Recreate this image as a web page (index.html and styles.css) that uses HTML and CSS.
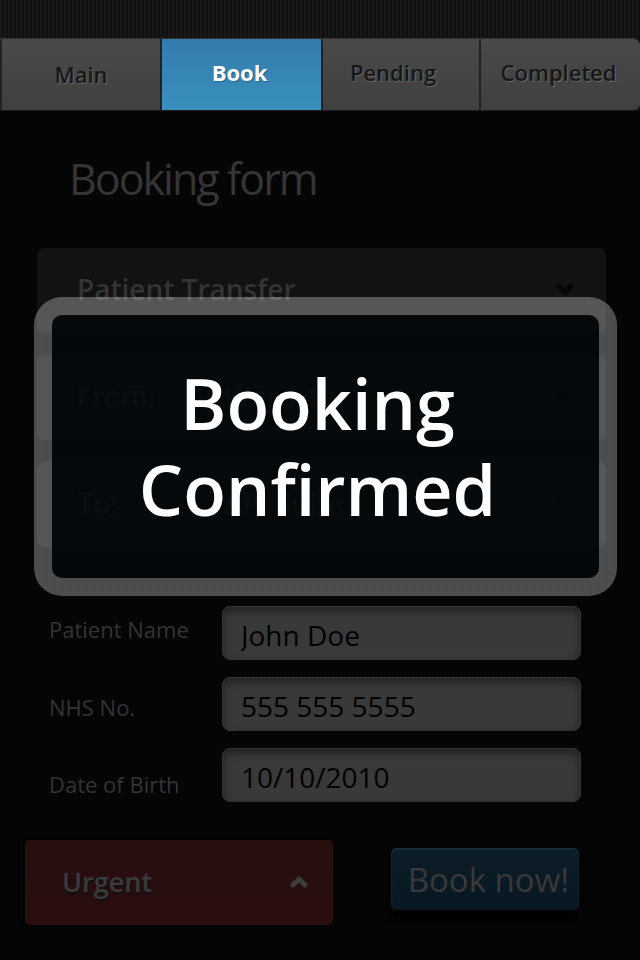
FILE: index.html
```html
<!DOCTYPE html>
<html lang="en">
<head>
<meta charset="utf-8">
<meta name="viewport" content="width=device-width, initial-scale=1">
<title>Booking form</title>
<link rel="stylesheet" href="styles.css">
</head>
<body>
<nav class="tabs">
  <a class="tab tab-low" href="#main">Main</a>
  <a class="tab active" href="#book" aria-current="page">Book</a>
  <a class="tab tab-pending" href="#pending">Pending</a>
  <a class="tab" href="#completed">Completed</a>
</nav>
<main class="page">
  <h1>Booking form</h1>
  <form>
    <div class="cards">
      <div class="card">
        <select class="card-select type" aria-label="Booking type"><option>Patient Transfer</option></select>
        <svg class="chevron" viewBox="0 0 18 12" aria-hidden="true"><path d="M3 3l6 6 6-6"/></svg>
      </div>
      <div class="card">
        <label for="from">From:</label>
        <select class="card-select" id="from"><option>Ward 10</option></select>
        <svg class="chevron" viewBox="0 0 18 12" aria-hidden="true"><path d="M3 3l6 6 6-6"/></svg>
      </div>
      <div class="card">
        <label for="to">To:</label>
        <select class="card-select" id="to"><option>API Suite</option></select>
        <svg class="chevron" viewBox="0 0 18 12" aria-hidden="true"><path d="M3 3l6 6 6-6"/></svg>
      </div>
      <div class="dialog" role="alertdialog" aria-labelledby="notice">
        <p id="notice">Booking<br>Confirmed</p>
      </div>
    </div>
    <div class="fields">
      <div class="labels">
        <label for="name">Patient Name</label>
        <label for="nhs">NHS No.</label>
        <label for="dob">Date of Birth</label>
      </div>
      <div class="inputs">
        <input id="name" type="text" value="John Doe">
        <input id="nhs" type="text" value="555 555 5555">
        <input id="dob" type="text" value="10/10/2010">
      </div>
    </div>
    <div class="actions">
      <button class="urgent" type="button">
        <span>Urgent</span>
        <svg class="chevron" viewBox="0 0 18 12" aria-hidden="true"><path d="M3 9l6-6 6 6"/></svg>
      </button>
      <button class="submit" type="submit">Book now!</button>
    </div>
  </form>
</main>
</body>
</html>
```
FILE: styles.css
```css
* { box-sizing: border-box; }

body {
  margin: 0;
  min-height: 100vh;
  padding-top: 38px;
  font-family: "Trebuchet MS", "Open Sans", "Noto Sans", sans-serif;
  background:
    repeating-linear-gradient(0deg, rgba(0, 0, 0, 0.15) 0 1px, transparent 1px 3px),
    repeating-linear-gradient(90deg, #1a1a1a 0 2px, #111 2px 4px);
}

.tabs {
  display: grid;
  grid-template-columns: 160fr 161fr 158fr 161fr;
  height: 73px;
  background: #222;
  border-top: 1px solid #303030;
  border-bottom: 1px solid #1b1b1b;
  border-radius: 0 7px 7px 0;
  overflow: hidden;
}

.tab {
  display: flex;
  align-items: center;
  justify-content: center;
  padding-bottom: 6px;
  padding-right: 4px;
  border-left: 2px solid #222;
  background: linear-gradient(#494949, #404040);
  color: #171717;
  font-size: 22px;
  font-weight: 600;
  text-decoration: none;
  text-shadow: 1px 1px 0 #666;
}

.tab-low { padding: 0 0 2px; }

.tab-pending { padding-right: 16px; }

.tab.active {
  background: linear-gradient(#337bad, #3990bd);
  color: #fff;
  font-weight: 700;
  text-shadow: 1px 1px 1px #24658c;
}

.page {
  min-height: calc(100vh - 111px);
  padding: 40px 34px 34px 37px;
  background: repeating-linear-gradient(90deg, #060606 0 2px, #040404 2px 4px);
}

h1 {
  margin: 0 0 41px 32px;
  color: #353535;
  font-size: 43px;
  line-height: 56px;
  font-weight: 400;
  letter-spacing: -2px;
}

.cards {
  position: relative;
  display: grid;
  gap: 22px;
}

.card {
  display: flex;
  align-items: center;
  height: 85px;
  padding: 0 32px 4px 40px;
  border-radius: 7px;
  background: #121212;
  color: #343434;
  font-size: 28px;
  font-weight: 600;
}

.card label { width: 147px; }

.card-select {
  flex: 1;
  appearance: none;
  border: 0;
  padding: 0;
  background: none;
  color: inherit;
  font: inherit;
}

.chevron {
  width: 18px;
  height: 12px;
  fill: none;
  stroke: #060606;
  stroke-width: 5;
  stroke-linecap: round;
  stroke-linejoin: round;
}

.dialog {
  position: absolute;
  inset: 49px -11px -49px -3px;
  display: flex;
  align-items: center;
  justify-content: center;
  border: 18px solid rgba(255, 255, 255, 0.29);
  border-radius: 28px;
  background: rgba(5, 9, 11, 0.9);
  background-clip: padding-box;
}

.dialog p {
  margin: 0 16px 2px 0;
  color: #fff;
  font-size: 70px;
  line-height: 86px;
  font-weight: 600;
  text-align: center;
}

.fields {
  display: grid;
  grid-template-columns: 173px 1fr;
  margin: 59px 25px 0 12px;
}

.labels {
  display: flex;
  flex-direction: column;
  justify-content: space-between;
  padding: 8px 0 3px;
  color: #343434;
  font-size: 22px;
  line-height: 30px;
}

.inputs {
  display: grid;
  gap: 17px;
}

.fields input {
  width: 100%;
  height: 54px;
  padding: 4px 18px 0;
  border: 1px solid #343434;
  border-radius: 8px;
  background: #393939;
  box-shadow: inset 0 4px 8px #202020;
  color: #000;
  font: 400 28px "Trebuchet MS", "Open Sans", "Noto Sans", sans-serif;
}

.actions {
  display: flex;
  justify-content: space-between;
  align-items: flex-start;
  margin: 38px 27px 0 -12px;
}

button {
  border: 0;
  font-family: inherit;
  cursor: pointer;
}

.urgent {
  display: flex;
  align-items: center;
  justify-content: space-between;
  width: 308px;
  height: 85px;
  padding: 0 25px 2px 37px;
  border-radius: 5px;
  background: linear-gradient(#270f10, #2a0d0f);
  box-shadow: 0 1px 3px #000;
  color: #3a3a3a;
  font-size: 27px;
  font-weight: 600;
  text-shadow: 1px 2px 1px #111;
}

.urgent .chevron { stroke: #3c3c3c; }

.submit {
  height: 62px;
  margin-top: 8px;
  padding: 0 10px 0 17px;
  border-radius: 6px;
  background: linear-gradient(#0c1d28, #071822);
  box-shadow: inset 0 1px 2px #20394a, 0 12px 6px -2px #000;
  color: #393939;
  font-size: 33px;
}
```
